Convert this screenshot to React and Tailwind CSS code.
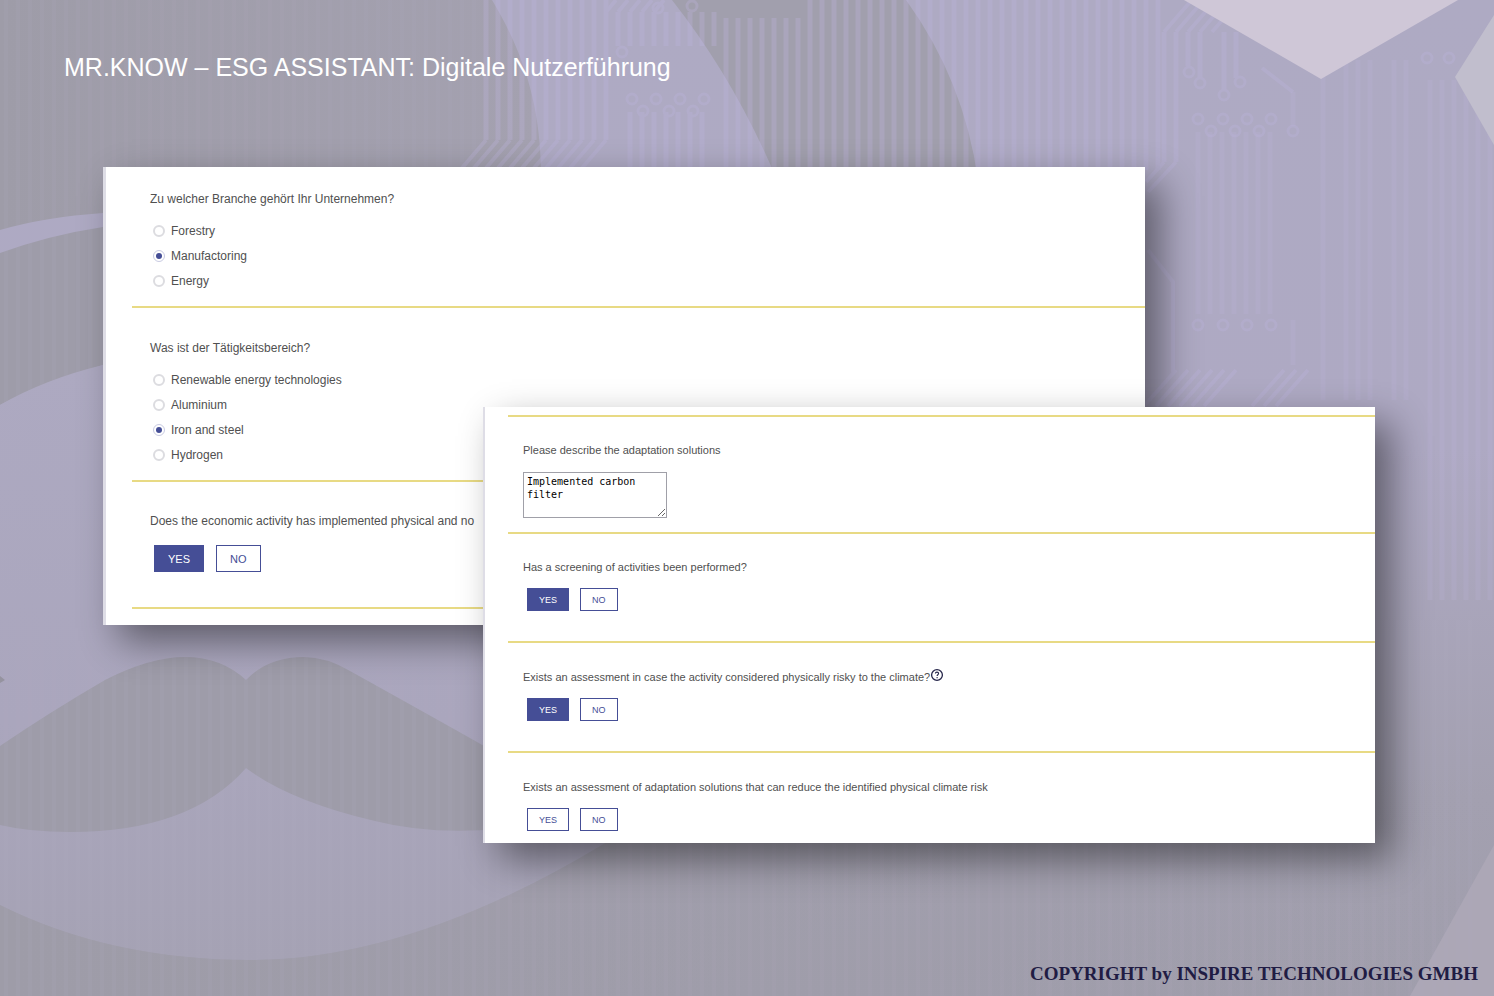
import React, { useState } from "react";

const Divider = () => <hr className="h-0.5 border-0 bg-[#e8da84]" />;

const RadioGroup = ({ name, legend, options, selected }) => {
  const [value, setValue] = useState(selected);

  return (
    <fieldset className="pl-[18px]">
      <legend className="text-xs leading-5">{legend}</legend>
      <div className="mt-3 flex flex-col gap-[5px] pl-[3px]">
        {options.map((option) => (
          <label key={option} className="flex items-center gap-1.5 text-xs leading-5">
            <input
              type="radio"
              name={name}
              checked={value === option}
              onChange={() => setValue(option)}
              className="size-3 appearance-none rounded-full border-2 border-[#dcdce0] bg-white checked:border checked:border-[#c9cbe2] checked:bg-[#454e96] checked:bg-clip-content checked:p-0.5"
            />
            {option}
          </label>
        ))}
      </div>
    </fieldset>
  );
};

const HelpIcon = () => (
  <svg className="-mt-px size-3.5" viewBox="0 0 14 14" fill="none" stroke="#26264a">
    <circle cx="7" cy="7" r="5.4" strokeWidth="1.3" />
    <path d="M5.4 5.6c0-2 3.2-2 3.2 0 0 1.1-1.5 1.2-1.5 2.3M7.1 9v1.2" strokeWidth="1.1" />
  </svg>
);

const YesNo = ({ question, selected, small, help }) => {
  const [value, setValue] = useState(selected);
  const size = small ? "h-[23px] pt-0.5 text-[9px] px-[11px]" : "h-[27px] pt-0.5 text-[11px] px-[13px]";
  const on = "bg-[#454e96] text-white";
  const off = "bg-white text-[#454e96]";

  return (
    <div role="group" aria-label={question}>
      <p className={small ? "flex text-[11px] leading-4" : "text-xs leading-5 whitespace-nowrap"}>
        {question}
        {help && <HelpIcon />}
      </p>
      <div className={small ? "mt-[13px] flex gap-[11px] pl-1" : "mt-3.5 flex gap-3 pl-1"}>
        {["YES", "NO"].map((answer) => (
          <button
            key={answer}
            type="button"
            aria-pressed={value === answer}
            onClick={() => setValue(answer)}
            className={`border border-[#454e96] ${size} ${value === answer ? on : off}`}
          >
            {answer}
          </button>
        ))}
      </div>
    </div>
  );
};

const range = (from, to, step) => {
  const out = [];
  for (let x = from; x <= to; x += step) out.push(x);
  return out;
};

// Circuit board traces as [x, top, bottom]
const traces = [
  ...range(486, 606, 12).map((x) => [x, 0, 140]),
  ...range(630, 702, 12).map((x) => [x, 112, 170]),
  ...range(618, 714, 12).map((x) => [x, 12, 46]),
  ...range(726, 1158, 12).map((x) => [x, x < 800 ? 18 : 0, 170]),
  [1164, 32, 162],
  [1176, 32, 162],
  [1188, 32, 66],
  [1200, 32, 78],
  [1224, 32, 90],
  [1236, 32, 78],
];

const faintTraces = [
  ...range(1198, 1270, 12).map((x) => [x, 132, 314]),
  [1293, 92, 126],
  [1293, 320, 365],
  ...[1323, 1346, 1358, 1370, 1394, 1406].map((x) => [x, 60, 400]),
  ...range(1430, 1490, 12).map((x) => [x, 80, 600]),
];

const diagonals = [
  ...range(486, 606, 12).map((x) => `M${x} 140l-24 28`),
  ...range(606, 654, 12).map((x) => `M${x} 12l10-12`),
  ...range(1164, 1212, 12).map((x) => `M${x} 32l26-30`),
  ...range(1176, 1236, 12).map((x) => `M${x} 370l-32 36`),
  ...range(1284, 1308, 12).map((x) => `M${x} 370l-32 36`),
  "M1164 162l-18 20M1176 162l-28 30M1148 250l25 32v90M1262 68l31 24",
];

const pads = [
  [622, 52], [632, 99], [656, 99], [680, 99], [704, 99], [643, 111], [669, 111], [693, 111],
  [658, 8], [692, 6], [1189, 72], [1200, 83], [1224, 95], [1240, 82],
  [1198, 119], [1223, 119], [1247, 119], [1271, 119],
  [1211, 131], [1235, 131], [1259, 131], [1293, 131],
  [1198, 325], [1223, 325], [1247, 325], [1271, 325],
  [1427, 58], [1449, 58],
];

// Mascot with the circuit board behind the panels
const Backdrop = () => (
  <svg
    className="absolute inset-0 -z-10 size-full"
    viewBox="0 0 1494 996"
    preserveAspectRatio="xMidYMid slice"
    aria-hidden="true"
  >
    <defs>
      <linearGradient id="base" x1="0" y1="0" x2="0" y2="1">
        <stop offset="0" stopColor="#aeaac3" />
        <stop offset="0.45" stopColor="#aea9c3" />
        <stop offset="0.8" stopColor="#a3a0b0" />
        <stop offset="1" stopColor="#a09eac" />
      </linearGradient>
      <linearGradient id="face" x1="0" y1="0" x2="0" y2="1">
        <stop offset="0" stopColor="#ada9c1" />
        <stop offset="0.6" stopColor="#aaa6bd" />
        <stop offset="1" stopColor="#a5a2b4" />
      </linearGradient>
      <linearGradient id="hat" x1="0" y1="0" x2="1" y2="0">
        <stop offset="0" stopColor="#9e9ca8" />
        <stop offset="1" stopColor="#a4a1b0" />
      </linearGradient>
      <linearGradient id="chin" x1="0" y1="0" x2="1" y2="0">
        <stop offset="0" stopColor="#9e9ca8" />
        <stop offset="1" stopColor="#9e9ca8" stopOpacity="0" />
      </linearGradient>
    </defs>
    <rect width="1494" height="996" fill="url(#base)" />
    <path d="M0 0h492c30 50 50 105 49 180v120L103 213Q45 217 0 230z" fill="url(#hat)" />
    <path d="M0 253q50-18 103-26h300v300L103 365Q45 382 0 405z" fill="#9e9ca9" />
    <path d="M672 0h234q58 80 72 180H777Q735 80 672 0z" fill="#a19fad" />
    <path d="M0 405q45-26 103-40h597v415Q451 960 251 960 110 960 0 905z" fill="url(#face)" />
    <path d="M0 905q110 55 251 55 200 0 449-180h794v216H0z" fill="url(#chin)" />
    <path
      d="M0 746Q50 712 105 680 150 657 185 657q36 0 61 23 22-23 58-23 22 0 46 14 90 50 150 84v74q-70 6-125-8-85-20-129-53Q190 832 70 832 30 832 0 825z"
      fill="#9e9ca9"
    />
    <path d="M0 676l5 4-5 3z" fill="#95939f" />
    <path d="M1494 845v151h-84z" fill="#aca7b6" />

    <g fill="none" stroke="#bdb4dc" strokeWidth="5" opacity="0.32">
      {traces.map(([x, top, bottom]) => (
        <path key={`${x}-${top}`} d={`M${x} ${top}V${bottom}`} />
      ))}
      <path d={diagonals.join("")} strokeWidth="4" />
      {pads.map(([x, y]) => (
        <circle key={`${x}-${y}`} cx={x} cy={y} r="5" strokeWidth="3" />
      ))}
    </g>
    <g stroke="#bdb4dc" strokeWidth="5" opacity="0.2">
      {faintTraces.map(([x, top, bottom]) => (
        <path key={`${x}-${top}`} d={`M${x} ${top}V${bottom}`} />
      ))}
    </g>
    <g stroke="#b4afc6" strokeWidth="4" opacity="0.1">
      {range(6, 474, 12).map((x) => (
        <path key={x} d={`M${x} 0V996`} />
      ))}
      {range(486, 1480, 12).map((x) => (
        <path key={x} d={`M${x} 620V996`} />
      ))}
    </g>

    <path d="M1184 0h274l-137 79z" fill="#cfc7d7" />
    <path d="M1494 15v130l-39-68z" fill="#c1becd" />
  </svg>
);

export default function App() {
  return (
    <main className="relative isolate flex min-h-screen flex-col overflow-hidden font-['Liberation_Sans',Arial,sans-serif] text-[#505050]">
      <Backdrop />
      <h1 className="pt-[47px] pl-16 text-[25px] leading-10 text-white">
        MR.KNOW – ESG ASSISTANT: Digitale Nutzerführung
      </h1>

      <div className="mt-20 grid">
        <section className="col-start-1 row-start-1 mr-[349px] ml-[103px] flex flex-col self-start border-l-3 border-[#dedde6] bg-white pt-[22px] pb-4 pl-[26px] shadow-[16px_16px_36px_rgba(0,0,0,0.45)]">
          <RadioGroup
            name="branche"
            legend="Zu welcher Branche gehört Ihr Unternehmen?"
            options={["Forestry", "Manufactoring", "Energy"]}
            selected="Manufactoring"
          />
          <div className="mt-[15px] mb-[30px]">
            <Divider />
          </div>
          <RadioGroup
            name="bereich"
            legend="Was ist der Tätigkeitsbereich?"
            options={["Renewable energy technologies", "Aluminium", "Iron and steel", "Hydrogen"]}
            selected="Iron and steel"
          />
          <div className="mt-[15px] mb-[29px]">
            <Divider />
          </div>
          <div className="pl-[18px]">
            <YesNo question="Does the economic activity has implemented physical and no" selected="YES" />
          </div>
          <div className="mt-[35px]">
            <Divider />
          </div>
        </section>

        <section className="col-start-1 row-start-1 mt-60 mr-[119px] ml-[483px] flex flex-col self-start border-l-2 border-[#dedde6] bg-white pt-2 pb-3 pl-[23px] shadow-[16px_16px_36px_rgba(0,0,0,0.45)]">
          <Divider />
          <div className="flex flex-col items-start pt-[25px] pb-3.5 pl-[15px]">
            <label htmlFor="solutions" className="text-[11px] leading-4">
              Please describe the adaptation solutions
            </label>
            <textarea
              id="solutions"
              defaultValue="Implemented carbon filter"
              className="mt-3.5 h-[46px] w-36 border border-[#a0a0a8] px-[3px] py-0.5 font-['DejaVu_Sans_Mono',monospace] text-[10px] leading-[13px] text-black"
            />
          </div>
          <Divider />
          <div className="pt-[25px] pb-[30px] pl-[15px]">
            <YesNo question="Has a screening of activities been performed?" selected="YES" small />
          </div>
          <Divider />
          <div className="pt-[26px] pb-[30px] pl-[15px]">
            <YesNo
              question="Exists an assessment in case the activity considered physically risky to the climate?"
              selected="YES"
              small
              help
            />
          </div>
          <Divider />
          <div className="pt-[26px] pl-[15px]">
            <YesNo
              question="Exists an assessment of adaptation solutions that can reduce the identified physical climate risk"
              small
            />
          </div>
        </section>
      </div>

      <footer className="mt-auto pr-4 pb-2 text-right font-['Liberation_Serif',serif] text-[19px] leading-7 font-bold text-[#211c44]">
        COPYRIGHT by INSPIRE TECHNOLOGIES GMBH
      </footer>
    </main>
  );
}
